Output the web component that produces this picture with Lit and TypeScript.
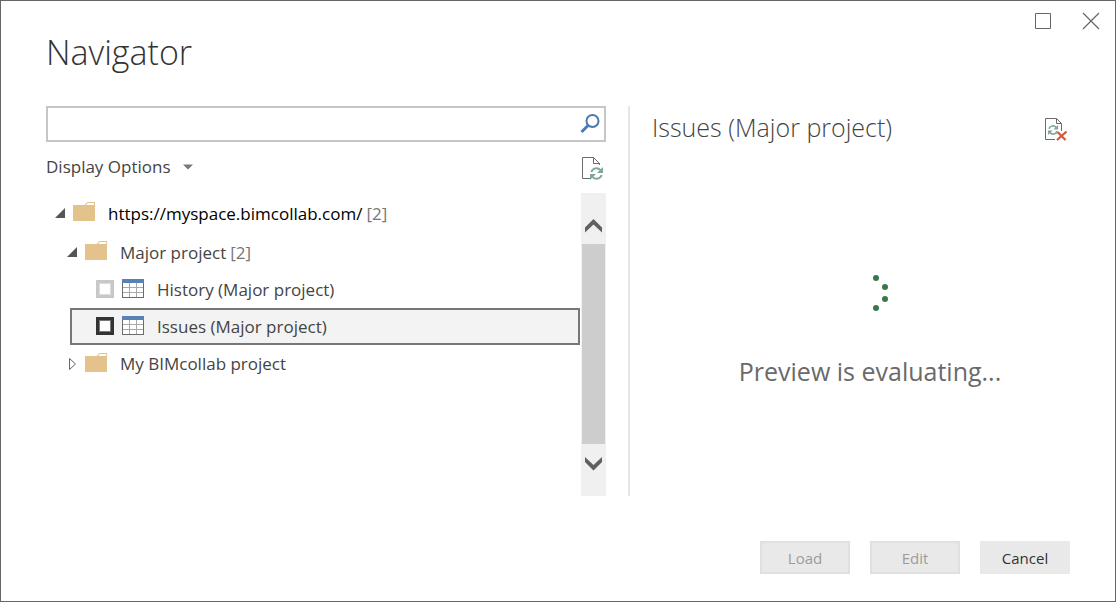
import { LitElement, html, svg, css, nothing } from "lit";
import { customElement, state } from "lit/decorators.js";
import { classMap } from "lit/directives/class-map.js";

interface TreeNode {
  id: string;
  kind: "root" | "group" | "leaf";
  label: string;
  count?: number;
  open?: boolean;
}

const NODES: TreeNode[] = [
  { id: "space", kind: "root", label: "https://myspace.bimcollab.com/", count: 2, open: true },
  { id: "major", kind: "group", label: "Major project", count: 2, open: true },
  { id: "history", kind: "leaf", label: "History (Major project)" },
  { id: "issues", kind: "leaf", label: "Issues (Major project)" },
  { id: "mine", kind: "group", label: "My BIMcollab project", open: false },
];

const folderIcon = html`<svg class="icon" width="22" height="20" viewBox="0 0 22 20" aria-hidden="true">
  <path d="M0 3h11.500l3-3H22v19H0z" fill="#e3c28c" />
  <path d="M13 3l2-2h6v2z" fill="#fff" />
</svg>`;

const tableIcon = html`<svg class="icon" width="22" height="19" viewBox="0 0 22 19" shape-rendering="crispEdges" aria-hidden="true">
  <path d="M0 3h22v16H0z" fill="#6b6b6b" />
  <path d="M1 4h20v14H1z" fill="#fff" />
  <path d="M7 4h1v14H7zM14 4h1v14h-1zM1 8h20v1H1zM1 13h20v1H1z" fill="#a8a8a8" />
  <path d="M0 0h22v4H0z" fill="#5882b5" />
</svg>`;

const arrows = svg`
  <path d="M-5.200 -1.500A5.400 5.400 0 0 1 4 -3.400" />
  <path d="M5.200 1.500A5.400 5.400 0 0 1 -4 3.400" />
  <path d="M6.500 -6.500v6h-6z" stroke="none" fill="#7fa898" />
  <path d="M-6.500 6.500v-6h6z" stroke="none" fill="#7fa898" />`;

@customElement("app-root")
export class AppRoot extends LitElement {
  @state() private selected = "issues";

  static styles = css`
    :host {
      display: block;
      font-family: "Open Sans", "Noto Sans", sans-serif;
      color: #444;
      background: #fff;
    }
    * { box-sizing: border-box; }
    button { font: inherit; color: inherit; background: none; border: 0; padding: 0; margin: 0; }
    svg { display: block; flex: none; }
    .window {
      min-height: 100vh;
      border: 1px solid #666;
      padding: 0 45px 27px;
      display: flex;
      flex-direction: column;
    }
    .top {
      height: 105px;
      display: flex;
      justify-content: space-between;
      align-items: flex-start;
    }
    h1 {
      margin: 27px 0 0;
      font-size: 34px;
      line-height: 48px;
      font-weight: 300;
      color: #333;
    }
    .controls { display: flex; gap: 30px; margin: 11px -30px 0 0; }
    .main {
      flex: 1;
      display: grid;
      grid-template-columns: 560fr 442fr;
      gap: 22px;
    }
    .left { display: flex; flex-direction: column; min-width: 0; }
    .search {
      height: 36px;
      border: 2px solid #c6c6c6;
      display: flex;
      align-items: center;
      padding-right: 4px;
    }
    .search input {
      flex: 1;
      min-width: 0;
      height: 100%;
      border: 0;
      outline: 0;
      padding: 0 8px;
      background: none;
      font: inherit;
      font-size: 17px;
    }
    .options {
      height: 51px;
      display: flex;
      justify-content: space-between;
      align-items: center;
      padding-right: 2px;
    }
    .options .menu {
      display: flex;
      align-items: center;
      gap: 12px;
      padding-bottom: 2px;
      font-size: 17px;
      line-height: 24px;
    }
    .browse { flex: 1; display: flex; }
    .tree { flex: 1; min-width: 0; list-style: none; margin: 0; padding: 0 1px 0 0; }
    .row {
      display: flex;
      align-items: center;
      font-size: 17px;
      line-height: 24px;
      height: 37px;
      white-space: nowrap;
    }
    .root { height: 40px; padding-left: 9px; color: #000; }
    .group { padding-left: 21px; }
    .group.open { height: 38px; }
    .leaf { margin-left: 24px; padding-left: 24px; border: 2px solid transparent; }
    .leaf.selected { border-color: #777; background: #f3f3f3; }
    .twisty { width: 10px; margin-right: 8px; }
    .icon { margin-bottom: 2px; }
    .name, .count { padding-top: 1px; }
    .name { margin-left: 13px; }
    .count { margin-left: 4px; color: #777; }
    .check {
      appearance: none;
      width: 18px;
      height: 18px;
      margin: 0 8px 2px 0;
      border: 3px solid #c8c8c8;
      outline: 1px solid #dcdcdc;
      outline-offset: -4px;
      background: #fff;
    }
    .selected .check { border-color: #333; outline-color: #777; }
    .scroll {
      width: 25px;
      background: #f0f0f0;
      display: flex;
      flex-direction: column;
      padding: 0 1px;
    }
    .scroll button { height: 51px; display: flex; justify-content: center; padding-top: 26px; }
    .scroll button.down { height: 52px; padding-top: 13px; }
    .thumb { flex: 1; background: #cdcdcd; }
    .right {
      border-left: 2px solid #e6e6e6;
      padding-left: 22px;
      display: flex;
      flex-direction: column;
      min-width: 0;
    }
    .heading { display: flex; justify-content: space-between; align-items: flex-start; padding-right: 3px; }
    h2 {
      margin: 0;
      padding-top: 3px;
      font-size: 25px;
      line-height: 36px;
      font-weight: 300;
      white-space: nowrap;
    }
    .cancel-refresh { margin-top: 12px; }
    .preview {
      flex: 1;
      display: flex;
      flex-direction: column;
      align-items: center;
      padding: 128px 0 0 18px;
      font-size: 25px;
      line-height: 36px;
      color: #6a6a6a;
    }
    .preview p { margin: 42px 0 0; }
    .actions { margin-top: 45px; display: flex; justify-content: flex-end; gap: 20px; }
    .actions button {
      width: 90px;
      height: 33px;
      background: #e9e9e9;
      font-size: 15px;
      line-height: 24px;
      color: #333;
    }
    .actions button:disabled { border: 2px solid #e0e0e0; color: #9c9c9c; }
  `;

  private twisty(open?: boolean) {
    return open
      ? html`<svg class="twisty" width="10" height="10" viewBox="0 0 10 10" aria-hidden="true"><path d="M10 0v10H0z" fill="#555" /></svg>`
      : html`<svg class="twisty" width="10" height="14" viewBox="0 0 10 14" aria-hidden="true"><path d="M2.500 1.500v11L8.500 7z" fill="#fff" stroke="#666" /></svg>`;
  }

  private row(n: TreeNode) {
    if (n.kind === "leaf") {
      const selected = n.id === this.selected;
      return html`<li
        role="treeitem"
        class=${classMap({ row: true, leaf: true, selected })}
        @click=${() => (this.selected = n.id)}
      >
        <input class="check" type="checkbox" id=${n.id} />
        ${tableIcon}
        <label class="name" for=${n.id}>${n.label}</label>
      </li>`;
    }
    return html`<li role="treeitem" class=${classMap({ row: true, [n.kind]: true, open: !!n.open })}>
      ${this.twisty(n.open)}${folderIcon}
      <span class="name">${n.label}</span>
      ${n.count ? html`<span class="count">[${n.count}]</span>` : nothing}
    </li>`;
  }

  render() {
    return html`<div class="window">
      <header class="top">
        <h1>Navigator</h1>
        <div class="controls">
          <button aria-label="Maximize">
            <svg width="18" height="18" viewBox="0 0 18 18"><path d="M1.500 1.500h15v15h-15z" fill="none" stroke="#666" /></svg>
          </button>
          <button aria-label="Close">
            <svg width="18" height="18" viewBox="0 0 18 18"><path d="M1 1l16 16M17 1L1 17" fill="none" stroke="#666" stroke-width="1.200" /></svg>
          </button>
        </div>
      </header>
      <main class="main">
        <section class="left">
          <div class="search">
            <input type="text" aria-label="Search" />
            <button aria-label="Search">
              <svg width="20" height="20" viewBox="0 0 20 20" fill="none" stroke="#4a7ab5">
                <circle cx="12.500" cy="7" r="6" stroke-width="2" />
                <path d="M8.300 11.200L1.500 18" stroke-width="3" />
              </svg>
            </button>
          </div>
          <div class="options">
            <button class="menu">
              Display Options
              <svg width="10" height="6" viewBox="0 0 10 6"><path d="M0 .5h10L5 5.500z" fill="#777" /></svg>
            </button>
            <button aria-label="Refresh">
              <svg width="22" height="24" viewBox="0 0 22 24" fill="none">
                <path d="M8 22.500H.5V1.500H11.500L17.500 7.500V9M11.500 1.500V7.500H17.500" stroke="#6b6b6b" />
                <g transform="translate(14.500 17.500)" stroke="#7fa898" stroke-width="2">${arrows}</g>
              </svg>
            </button>
          </div>
          <div class="browse">
            <ul class="tree" role="tree" aria-label="Sources">${NODES.map((n) => this.row(n))}</ul>
            <div class="scroll">
              <button aria-label="Scroll up">
                <svg width="17" height="14" viewBox="0 0 17 14"><path d="M0 8.500L8.500 0 17 8.500v5L8.500 5.500 0 13.500z" fill="#606060" /></svg>
              </button>
              <div class="thumb"></div>
              <button class="down" aria-label="Scroll down">
                <svg width="17" height="14" viewBox="0 0 17 14"><path d="M0 5L8.500 13.500 17 5V0L8.500 8 0 0z" fill="#606060" /></svg>
              </button>
            </div>
          </div>
        </section>
        <section class="right">
          <div class="heading">
            <h2>Issues (Major project)</h2>
            <button class="cancel-refresh" aria-label="Cancel refresh">
              <svg width="22" height="23" viewBox="0 0 22 23" fill="none">
                <path d="M10 21.500H.5V.5H11.500L16.500 5.500V13M11.500 .5V5.500H16.500" stroke="#6b6b6b" />
                <g transform="translate(8 12) scale(.78)" stroke="#7fa898" stroke-width="2.200">${arrows}</g>
                <path d="M12.500 14L20.500 22M21.500 13.500L12 22" stroke="#d05a35" stroke-width="2.200" />
              </svg>
            </button>
          </div>
          <div class="preview" role="status">
            <svg width="36" height="38" viewBox="0 0 36 38" fill="#3b764c" aria-hidden="true">
              <circle cx="24" cy="5" r="3" /><circle cx="33" cy="14" r="3" />
              <circle cx="33" cy="26" r="3" /><circle cx="24" cy="35" r="3" />
            </svg>
            <p>Preview is evaluating...</p>
          </div>
        </section>
      </main>
      <footer class="actions">
        <button disabled>Load</button>
        <button disabled>Edit</button>
        <button>Cancel</button>
      </footer>
    </div>`;
  }
}
